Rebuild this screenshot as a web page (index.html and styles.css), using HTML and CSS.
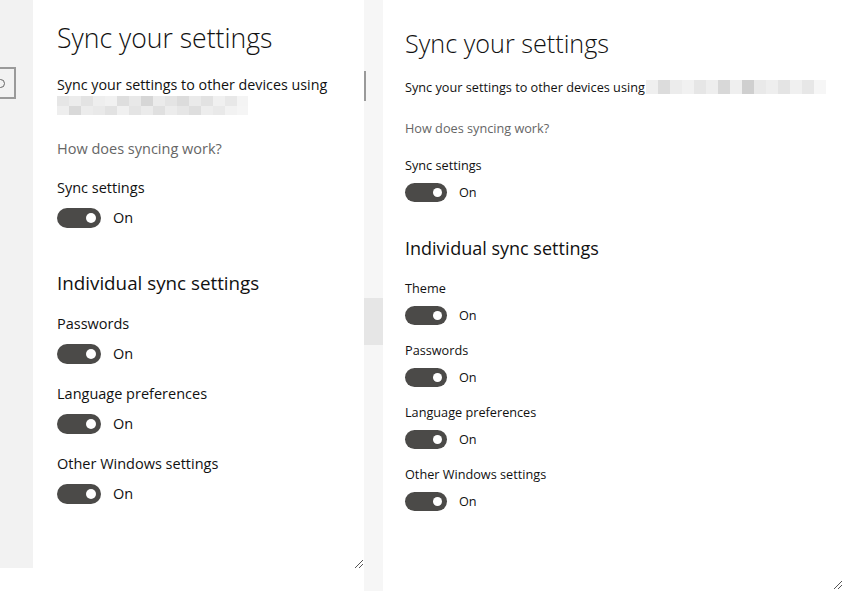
FILE: index.html
```html
<!DOCTYPE html>
<html lang="en">
<head>
<meta charset="utf-8">
<title>Sync your settings</title>
<link rel="stylesheet" href="styles.css">
</head>
<body>
<div class="screen">
  <section class="win win-a">
    <nav class="nav">
      <div class="search"><span class="search-icon"></span></div>
    </nav>
    <main class="content">
      <h1 class="title">Sync your settings</h1>
      <p class="desc">Sync your settings to other devices using</p>
      <div class="blur"><div class="blur-row r1"></div><div class="blur-row r2"></div></div>
      <a class="link">How does syncing work?</a>
      <div class="group first">
        <div class="label">Sync settings</div>
        <div class="toggle-row"><span class="toggle"><span class="knob"></span></span><span class="state">On</span></div>
      </div>
      <h2 class="heading">Individual sync settings</h2>
      <div class="group">
        <div class="label">Passwords</div>
        <div class="toggle-row"><span class="toggle"><span class="knob"></span></span><span class="state">On</span></div>
      </div>
      <div class="group">
        <div class="label">Language preferences</div>
        <div class="toggle-row"><span class="toggle"><span class="knob"></span></span><span class="state">On</span></div>
      </div>
      <div class="group">
        <div class="label">Other Windows settings</div>
        <div class="toggle-row"><span class="toggle"><span class="knob"></span></span><span class="state">On</span></div>
      </div>
      <svg class="grip" width="8" height="8" viewBox="0 0 8 8"><g fill="#555"><rect x="7" y="0" width="1" height="1"/><rect x="6" y="1" width="1" height="1"/><rect x="5" y="2" width="1" height="1"/><rect x="4" y="3" width="1" height="1"/><rect x="3" y="4" width="1" height="1"/><rect x="2" y="5" width="1" height="1"/><rect x="1" y="6" width="1" height="1"/><rect x="0" y="7" width="1" height="1"/><rect x="7" y="4" width="1" height="1"/><rect x="6" y="5" width="1" height="1"/><rect x="5" y="6" width="1" height="1"/><rect x="4" y="7" width="1" height="1"/></g></svg>
    </main>
  </section>
  <section class="win win-b">
    <nav class="nav">
      <div class="search"></div>
      <div class="thumb"></div>
    </nav>
    <main class="content">
      <h1 class="title">Sync your settings</h1>
      <div class="desc-line"><p class="desc">Sync your settings to other devices using</p><div class="blur"></div></div>
      <a class="link">How does syncing work?</a>
      <div class="group first">
        <div class="label">Sync settings</div>
        <div class="toggle-row"><span class="toggle"><span class="knob"></span></span><span class="state">On</span></div>
      </div>
      <h2 class="heading">Individual sync settings</h2>
      <div class="group">
        <div class="label">Theme</div>
        <div class="toggle-row"><span class="toggle"><span class="knob"></span></span><span class="state">On</span></div>
      </div>
      <div class="group">
        <div class="label">Passwords</div>
        <div class="toggle-row"><span class="toggle"><span class="knob"></span></span><span class="state">On</span></div>
      </div>
      <div class="group">
        <div class="label">Language preferences</div>
        <div class="toggle-row"><span class="toggle"><span class="knob"></span></span><span class="state">On</span></div>
      </div>
      <div class="group">
        <div class="label">Other Windows settings</div>
        <div class="toggle-row"><span class="toggle"><span class="knob"></span></span><span class="state">On</span></div>
      </div>
      <svg class="grip" width="8" height="8" viewBox="0 0 8 8"><g fill="#555"><rect x="7" y="0" width="1" height="1"/><rect x="6" y="1" width="1" height="1"/><rect x="5" y="2" width="1" height="1"/><rect x="4" y="3" width="1" height="1"/><rect x="3" y="4" width="1" height="1"/><rect x="2" y="5" width="1" height="1"/><rect x="1" y="6" width="1" height="1"/><rect x="0" y="7" width="1" height="1"/><rect x="7" y="4" width="1" height="1"/><rect x="6" y="5" width="1" height="1"/><rect x="5" y="6" width="1" height="1"/><rect x="4" y="7" width="1" height="1"/></g></svg>
    </main>
  </section>
</div>
</body>
</html>
```

FILE: styles.css
```css
* { box-sizing: border-box; }
html, body { margin: 0; padding: 0; background: #fff; }
body {
  font-family: "Open Sans", "Noto Sans", sans-serif;
  color: #111;
  width: 845px;
  height: 591px;
  overflow: hidden;
}
.screen { display: flex; align-items: flex-start; height: 591px; }

.win { display: flex; }
.nav { display: flex; flex-direction: column; flex: none; }
.content { position: relative; flex: 1; display: flex; flex-direction: column; align-items: flex-start; }
h1, h2, p { margin: 0; font-weight: 400; }
.title { font-weight: 300; white-space: nowrap; }
.desc { white-space: nowrap; }
.link { color: #666; white-space: nowrap; }
.label { white-space: nowrap; }
.toggle-row { display: flex; align-items: center; }
.toggle { display: flex; align-items: center; justify-content: flex-end; background: #4b4a48; }
.knob { background: #fff; border-radius: 50%; }
.grip { position: absolute; }

/* left window */
.win-a { width: 364px; height: 568px; }
.win-a .nav { width: 33px; background: #f2f2f2; }
.win-a .search {
  margin-top: 67px; width: 16px; height: 32px;
  border: 2px solid #9a9a9a; border-left: none;
  overflow: hidden;
}
.win-a .search-icon {
  display: block; width: 9px; height: 9px; margin: 10px 0 0 -4px;
  border: 1.5px solid #666; border-radius: 50%;
}
.win-a .content { padding-left: 24px; }
.win-a .title { font-size: 26.6px; line-height: 40px; margin-top: 18px; }
.win-a .desc { font-size: 14.3px; line-height: 20px; margin-top: 17px; }
.win-a .blur { margin-top: 1px; width: 191px; }
.win-a .blur-row { height: 9.5px; }
.win-a .blur-row.r1 {
  background: linear-gradient(90deg,
    #e6e6e6 0 12px, #ececec 12px 24px, #e3e3e3 24px 36px, #eeeeee 36px 48px, #f1f1f1 48px 60px,
    #dedede 60px 72px, #e8e8e8 72px 84px, #d6d6d6 84px 96px, #ebebeb 96px 108px, #e4e4e4 108px 120px,
    #dcdcdc 120px 132px, #eaeaea 132px 144px, #e2e2e2 144px 156px, #f0f0f0 156px 168px, #e8e8e8 168px 180px, #f4f4f4 180px 191px);
}
.win-a .blur-row.r2 {
  background: linear-gradient(90deg,
    #eeeeee 0 12px, #d9d9d9 12px 24px, #ececec 24px 36px, #e9e9e9 36px 48px, #e2e2e2 48px 60px,
    #f0f0f0 60px 72px, #e4e4e4 72px 84px, #ebebeb 84px 96px, #e0e0e0 96px 108px, #ececec 108px 120px,
    #e6e6e6 120px 132px, #dedede 132px 144px, #ededed 144px 156px, #e9e9e9 156px 168px, #f2f2f2 168px 180px, #f5f5f5 180px 191px);
}
.win-a .link { font-size: 14.5px; line-height: 20px; margin-top: 24px; }
.win-a .label { font-size: 14.5px; line-height: 20px; }
.win-a .group { margin-top: 20px; }
.win-a .group.first { margin-top: 19px; }
.win-a .heading { font-size: 18.8px; line-height: 28px; margin-top: 41px; margin-bottom: -3px; }
.win-a .toggle-row { margin-top: 10px; gap: 12px; }
.win-a .toggle { width: 44px; height: 20px; border-radius: 10px; padding-right: 5px; }
.win-a .knob { width: 10px; height: 10px; }
.win-a .state { font-size: 14.5px; line-height: 20px; }
.win-a .grip { right: 1px; bottom: 0; }

/* right window */
.win-b { flex: 1; height: 591px; }
.win-b .nav { width: 19px; background: #f6f6f6; }
.win-b .search { margin-top: 71px; width: 2px; height: 30px; background: #9a9a9a; }
.win-b .thumb { margin-top: 197px; height: 47px; background: #e6e6e6; }
.win-b .content { padding-left: 22px; }
.win-b .title { font-size: 25.2px; line-height: 36px; margin-top: 25px; }
.win-b .desc-line { display: flex; align-items: center; margin-top: 17px; height: 18px; }
.win-b .desc { font-size: 12.7px; line-height: 18px; }
.win-b .blur {
  width: 180px; height: 14px; margin-left: 1px;
  background: linear-gradient(90deg,
    #efefef 0 12px, #dcdcdc 12px 24px, #ececec 24px 36px, #f1f1f1 36px 48px, #e6e6e6 48px 60px,
    #eeeeee 60px 72px, #d8d8d8 72px 84px, #efefef 84px 96px, #cfcfcf 96px 108px, #e9e9e9 108px 120px,
    #eeeeee 120px 132px, #e4e4e4 132px 144px, #f0f0f0 144px 156px, #e7e7e7 156px 168px, #f6f6f6 168px 180px);
}
.win-b .link { font-size: 12.7px; line-height: 18px; margin-top: 23px; }
.win-b .label { font-size: 12.7px; line-height: 18px; }
.win-b .group { margin-top: 16px; }
.win-b .group.first { margin-top: 19px; }
.win-b .heading { font-size: 18px; line-height: 26px; margin-top: 33px; margin-bottom: 2px; }
.win-b .toggle-row { margin-top: 9px; gap: 12px; }
.win-b .toggle { width: 42px; height: 19px; border-radius: 9.5px; padding-right: 5px; }
.win-b .knob { width: 9px; height: 9px; }
.win-b .state { font-size: 12.7px; line-height: 19px; }
.win-b .grip { right: 3px; bottom: 2px; }
```
